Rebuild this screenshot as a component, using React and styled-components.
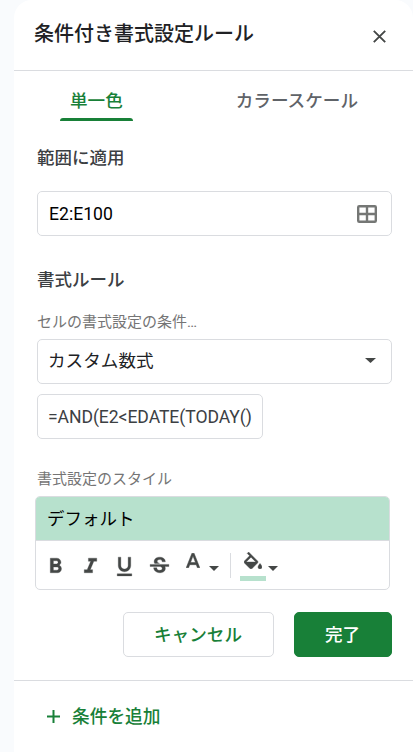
import styled, { createGlobalStyle } from "styled-components"
import {
  MdFormatBold,
  MdFormatItalic,
  MdFormatUnderlined,
  MdStrikethroughS,
} from "react-icons/md"

const GlobalStyle = createGlobalStyle`
  * {
    box-sizing: border-box;
  }
  body {
    margin: 0;
    background: #f9fbfd;
    font-family: Roboto, "Noto Sans CJK JP", sans-serif;
  }
  button, input {
    font-family: inherit;
  }
`

const Sidebar = styled.aside`
  display: flex;
  flex-direction: column;
  height: 752px;
  margin-left: 14px;
  background: #fff;
  border-radius: 18px 18px 0 0;
  overflow: hidden;
`

const Header = styled.header`
  display: flex;
  align-items: center;
  justify-content: space-between;
  height: 71px;
  padding: 0 27px 3px 20px;
  border-bottom: 1px solid #dadce0;
`

const Title = styled.h1`
  margin: 0;
  font-size: 20px;
  font-weight: 500;
  line-height: 30px;
  color: #202124;
`

const IconButton = styled.button`
  display: flex;
  padding: 0;
  border: 0;
  background: none;
  color: #444746;
`

const CloseButton = styled(IconButton)`
  margin-top: 5px;
`

const Tabs = styled.nav`
  display: flex;
  justify-content: space-between;
  height: 50px;
  padding: 0 45px 0 46px;
`

const Tab = styled.button`
  display: flex;
  flex-direction: column;
  justify-content: space-between;
  padding: 17px 10px 0;
  border: 0;
  background: none;
  font-size: 17.6px;
  font-weight: 500;
  line-height: 26px;
  color: ${({ $active }) => ($active ? "#188038" : "#5f6368")};

  &::after {
    content: "";
    align-self: stretch;
    height: 3px;
    margin: 0 -10px;
    border-radius: 3px 3px 0 0;
    background: ${({ $active }) => ($active ? "#188038" : "transparent")};
  }
`

const Form = styled.div`
  display: flex;
  flex-direction: column;
  height: 559px;
  padding: 24px 21px 0 23px;
`

const SectionTitle = styled.h2`
  margin: ${({ $top }) => $top || 0} 0 0;
  font-size: 17.5px;
  font-weight: 500;
  line-height: 26px;
  color: #3c4043;
`

const Label = styled.div`
  margin-top: ${({ $top }) => $top};
  font-size: 15px;
  line-height: 22px;
  color: #757575;
`

const Field = styled.div`
  display: flex;
  align-items: center;
  justify-content: space-between;
  width: ${({ $width }) => $width || "100%"};
  height: 45px;
  margin-top: ${({ $top }) => $top};
  padding: 0 14px ${({ $bottom }) => $bottom || 0} ${({ $left }) => $left || "10px"};
  border: 1px solid #dadce0;
  border-radius: 5px;
  font-size: 17.6px;
  letter-spacing: ${({ $spacing }) => $spacing || "normal"};
  line-height: 26px;
  white-space: nowrap;
  color: ${({ $color }) => $color};
`

const FieldIcon = styled.span`
  display: flex;
  margin: ${({ $margin }) => $margin};
`

const StyleBox = styled.div`
  width: 355px;
  height: 94px;
  margin: 6px 0 0 -2px;
  border: 1px solid #dadce0;
  border-radius: 5px;
  overflow: hidden;
`

const Preview = styled.div`
  height: 44px;
  padding-left: 11px;
  border-bottom: 1px solid #dadce0;
  background: #b7e1cd;
  font-size: 17.5px;
  line-height: 45px;
  color: #000;
`

const Toolbar = styled.div`
  display: flex;
  align-items: center;
  height: 48px;
  padding: 2px 0 0 7px;
`

const FormatButton = styled(IconButton)`
  margin-right: 9.5px;

  path:not([fill="none"]) {
    stroke: currentColor;
    stroke-width: 0.3px;
  }

  path[fill="none"] {
    stroke: none;
  }
`

const MenuButton = styled(IconButton)`
  align-items: flex-end;
  gap: ${({ $gap }) => $gap};
`

const TextColorButton = styled(MenuButton)`
  margin-left: 5px;
`

const ColorIcon = styled.span`
  display: flex;
  flex-direction: column;
  align-items: center;
  width: ${({ $width }) => $width};
  height: 29px;
  padding-top: ${({ $top }) => $top || 0};
`

const Swatch = styled.span`
  width: 26px;
  height: 5px;
  margin-top: auto;
  background: #b7e1cd;
`

const MenuArrow = styled.span`
  display: flex;
  margin-bottom: 10px;
`

const Separator = styled.span`
  width: 1px;
  height: 25px;
  margin: -2px 9px 0 11px;
  background: #dadce0;
`

const Actions = styled.div`
  display: flex;
  justify-content: flex-end;
  gap: 20px;
  margin-top: 22px;
`

const Button = styled.button`
  width: ${({ $width }) => $width};
  height: 45px;
  padding: 0 1px 0 0;
  border: 1px solid ${({ $primary }) => ($primary ? "#188038" : "#dadce0")};
  border-radius: 5px;
  background: ${({ $primary }) => ($primary ? "#188038" : "#fff")};
  font-size: 17.6px;
  font-weight: 500;
  line-height: 26px;
  color: ${({ $primary }) => ($primary ? "#fff" : "#188038")};
`

const AddRule = styled.button`
  display: flex;
  align-items: center;
  gap: 12px;
  height: 72px;
  padding: 0 0 0 33px;
  border: 0;
  border-top: 1px solid #dadce0;
  background: none;
  font-size: 17.7px;
  font-weight: 500;
  line-height: 26px;
  color: #188038;
`

const CloseIcon = () => (
  <svg width="13" height="13" viewBox="0 0 13 13" stroke="currentColor" strokeWidth="1.9">
    <path d="M0.8 0.8L12.2 12.2M12.2 0.8L0.8 12.2" />
  </svg>
)

const GridIcon = () => (
  <svg width="20" height="18" viewBox="0 0 20 18" fill="none" stroke="#757775" strokeWidth="2.4">
    <rect x="1.2" y="1.2" width="17.6" height="15.6" rx="1" />
    <path d="M10 1v16M1 9h18" />
  </svg>
)

const Arrow = ({ width = 10, height = 5 }) => (
  <svg width={width} height={height} viewBox="0 0 10 5" preserveAspectRatio="none" fill="#444746">
    <path d="M0 0h10L5 5z" />
  </svg>
)

const TextColorIcon = () => (
  <svg width="14" height="15" viewBox="5.3 3 13.4 14" fill="currentColor" stroke="currentColor" strokeWidth="0.5">
    <path d="M11 3L5.5 17h2.25l1.12-3h6.25l1.12 3h2.25L13 3h-2zm-1.38 9L12 5.67 14.38 12H9.62z" />
  </svg>
)

const FillIcon = () => (
  <svg width="18" height="17" viewBox="3 0 18 17" fill="currentColor" stroke="currentColor" strokeWidth="0.4">
    <path d="M16.56 8.94L7.62 0 6.21 1.41l2.38 2.38-5.15 5.15c-.59.59-.59 1.54 0 2.12l5.5 5.5c.29.29.68.44 1.06.44s.77-.15 1.06-.44l5.5-5.5c.59-.58.59-1.53 0-2.12zM5.21 10L10 5.21 14.79 10H5.21zM19 11.5s-2 2.17-2 3.5c0 1.1.9 2 2 2s2-.9 2-2c0-1.33-2-3.5-2-3.5z" />
  </svg>
)

const PlusIcon = () => (
  <svg width="13" height="13" viewBox="0 0 13 13" stroke="currentColor" strokeWidth="2">
    <path d="M6.5 0v13M0 6.5h13" />
  </svg>
)

const formats = [
  { name: "太字", Icon: MdFormatBold },
  { name: "斜体", Icon: MdFormatItalic },
  { name: "下線", Icon: MdFormatUnderlined },
  { name: "取り消し線", Icon: MdStrikethroughS },
]

const App = () => (
  <>
    <GlobalStyle />
    <Sidebar>
      <Header>
        <Title>条件付き書式設定ルール</Title>
        <CloseButton>
          <CloseIcon />
        </CloseButton>
      </Header>
      <Tabs>
        <Tab $active>単一色</Tab>
        <Tab>カラースケール</Tab>
      </Tabs>
      <Form>
        <SectionTitle>範囲に適用</SectionTitle>
        <Field $top="20px" $left="11px" $color="#000">
          E2:E100
          <FieldIcon $margin="1px 0 0">
            <GridIcon />
          </FieldIcon>
        </Field>
        <SectionTitle $top="31px">書式ルール</SectionTitle>
        <Label $top="18px">セルの書式設定の条件…</Label>
        <Field $top="6px" $bottom="2px" $color="#202124">
          カスタム数式
          <FieldIcon $margin="0 1px 0 0">
            <Arrow width={11} />
          </FieldIcon>
        </Field>
        <Field $top="10px" $width="226px" $spacing="-0.08px" $color="#3c4043">
          =AND(E2&lt;EDATE(TODAY()
        </Field>
        <Label $top="29px">書式設定のスタイル</Label>
        <StyleBox>
          <Preview>デフォルト</Preview>
          <Toolbar>
            {formats.map(({ name, Icon }) => (
              <FormatButton key={name}>
                <Icon size={25} />
              </FormatButton>
            ))}
            <TextColorButton $gap="9px">
              <ColorIcon $width="14px" $top="1px">
                <TextColorIcon />
              </ColorIcon>
              <MenuArrow>
                <Arrow />
              </MenuArrow>
            </TextColorButton>
            <Separator />
            <MenuButton $gap="2px">
              <ColorIcon $width="26px">
                <FillIcon />
                <Swatch />
              </ColorIcon>
              <MenuArrow>
                <Arrow />
              </MenuArrow>
            </MenuButton>
          </Toolbar>
        </StyleBox>
        <Actions>
          <Button $width="151px">キャンセル</Button>
          <Button $width="98px" $primary>
            完了
          </Button>
        </Actions>
      </Form>
      <AddRule>
        <PlusIcon />
        条件を追加
      </AddRule>
    </Sidebar>
  </>
)

export default App
